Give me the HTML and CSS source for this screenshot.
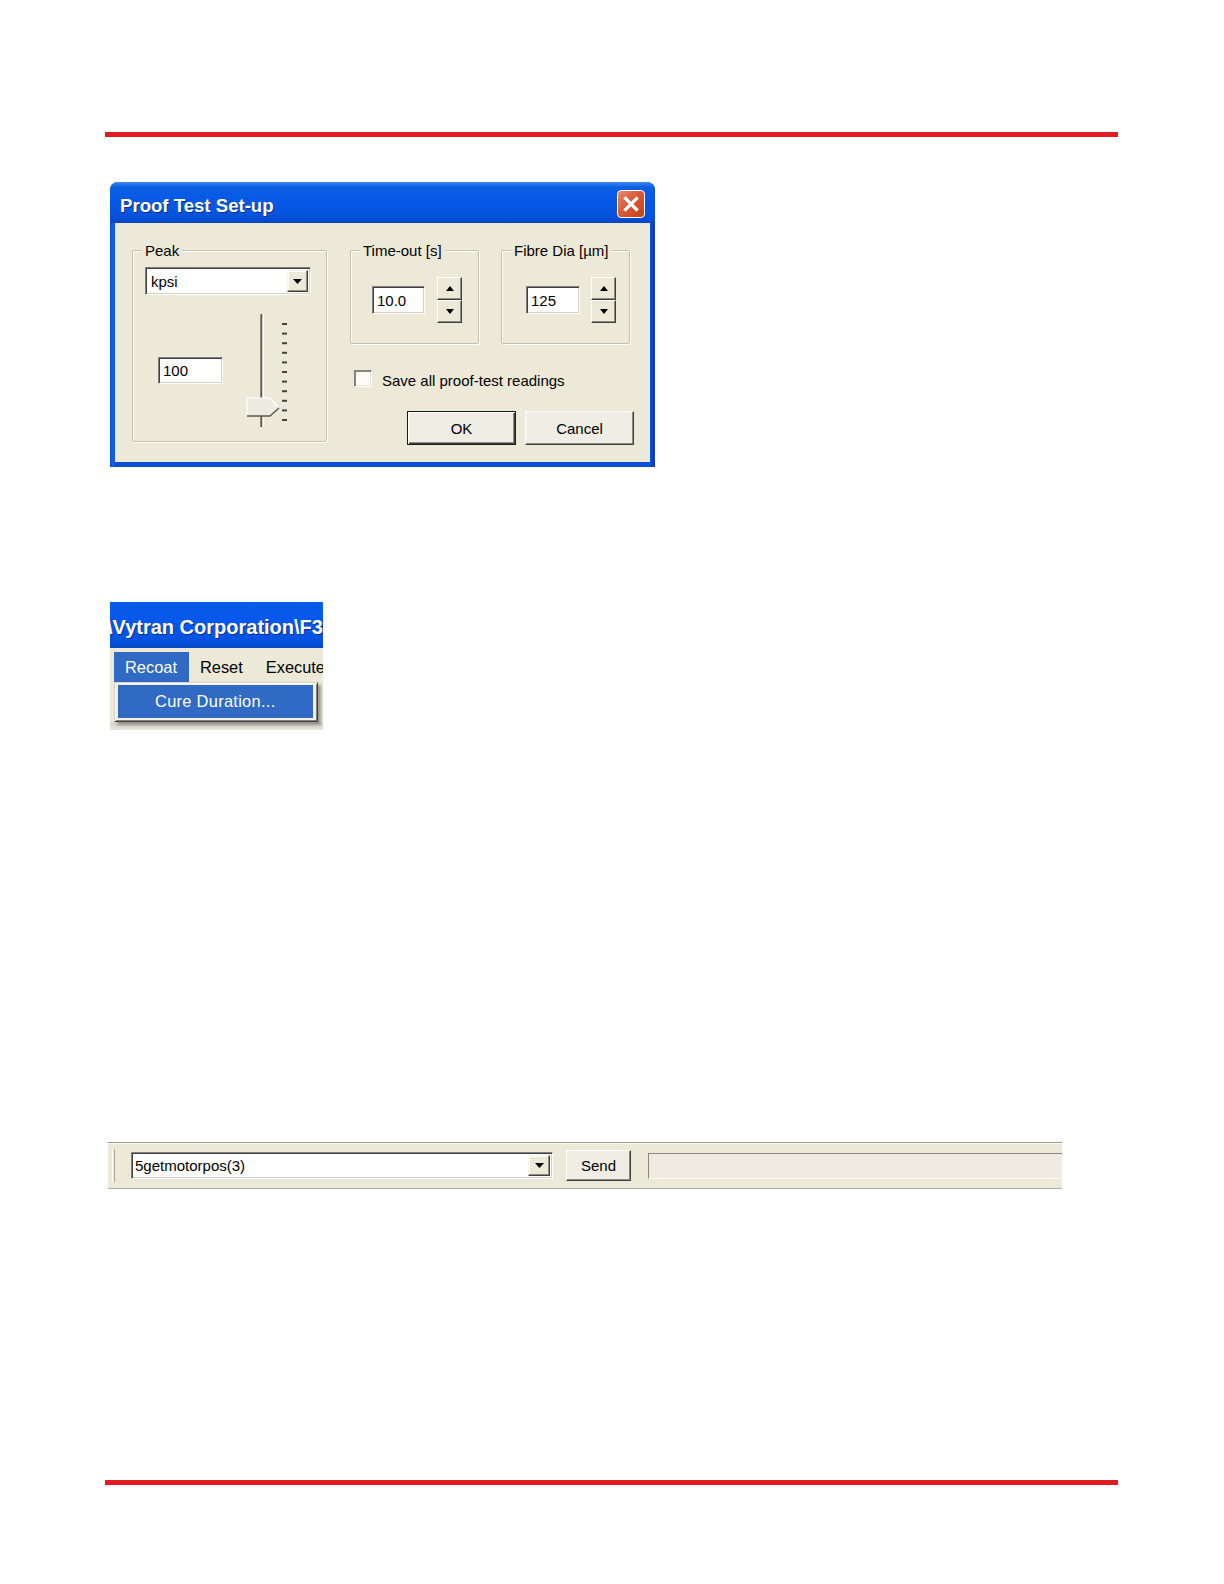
FILE: index.html
```html
<!DOCTYPE html>
<html>
<head>
<meta charset="utf-8">
<title>Proof Test Set-up</title>
<link rel="stylesheet" href="styles.css">
</head>
<body>
<div class="page">
  <div class="rule"></div>

  <div class="dialog">
    <div class="dlg-title">
      <span class="dlg-title-text">Proof Test Set-up</span>
      <span class="close-btn">
        <svg width="26" height="26" viewBox="0 0 26 26"><path d="M7.5 7.5 L18.5 18.5 M18.5 7.5 L7.5 18.5" stroke="#fff" stroke-width="3.2" stroke-linecap="square"/></svg>
      </span>
    </div>
    <div class="dlg-body">
      <div class="group group-peak">
        <span class="group-label">Peak</span>
        <div class="combo combo-kpsi">
          <span class="combo-text">kpsi</span>
          <span class="drop-btn"><svg width="9" height="5" viewBox="0 0 9 5"><polygon points="0,0 9,0 4.5,5" fill="#000"/></svg></span>
        </div>
        <div class="peak-row">
          <div class="textbox tb-peak">100</div>
          <svg class="slider" width="45" height="116" viewBox="0 0 45 116">
            <rect x="15" y="2" width="4" height="113" fill="#d8d5c8"/>
            <rect x="15" y="2" width="1" height="113" fill="#8d8b80"/>
            <rect x="16" y="2" width="1" height="113" fill="#5a584f"/>
            <rect x="18" y="2" width="1" height="113" fill="#ffffff"/>
            <polygon points="2,86 25,86 34,96 25,104 2,104" fill="#ecebe2"/>
            <polyline points="2,104 2,86 25,86 33,95" fill="none" stroke="#ffffff" stroke-width="1.2"/>
            <polyline points="34,96 25,104 2,104" fill="none" stroke="#5a584f" stroke-width="1.4"/>
            <rect x="37" y="11" width="5" height="2" fill="#444"/>
            <rect x="37" y="20.6" width="5" height="2" fill="#444"/>
            <rect x="37" y="30.2" width="5" height="2" fill="#444"/>
            <rect x="37" y="39.8" width="5" height="2" fill="#444"/>
            <rect x="37" y="49.4" width="5" height="2" fill="#444"/>
            <rect x="37" y="59" width="5" height="2" fill="#444"/>
            <rect x="37" y="68.6" width="5" height="2" fill="#444"/>
            <rect x="37" y="78.2" width="5" height="2" fill="#444"/>
            <rect x="37" y="87.8" width="5" height="2" fill="#444"/>
            <rect x="37" y="97.4" width="5" height="2" fill="#444"/>
            <rect x="37" y="107" width="5" height="2" fill="#444"/>
          </svg>
        </div>
      </div>

      <div class="right-col">
        <div class="groups-row">
          <div class="group group-small">
            <span class="group-label">Time-out [s]</span>
            <div class="spin-row spin-time">
              <div class="textbox tb-time">10.0</div>
              <div class="spinner">
                <span class="spin-btn"><svg width="8" height="5" viewBox="0 0 8 5"><polygon points="0,5 8,5 4,0" fill="#000"/></svg></span>
                <span class="spin-btn"><svg width="8" height="5" viewBox="0 0 8 5"><polygon points="0,0 8,0 4,5" fill="#000"/></svg></span>
              </div>
            </div>
          </div>
          <div class="group group-small">
            <span class="group-label">Fibre Dia [µm]</span>
            <div class="spin-row spin-fibre">
              <div class="textbox tb-fibre">125</div>
              <div class="spinner">
                <span class="spin-btn"><svg width="8" height="5" viewBox="0 0 8 5"><polygon points="0,5 8,5 4,0" fill="#000"/></svg></span>
                <span class="spin-btn"><svg width="8" height="5" viewBox="0 0 8 5"><polygon points="0,0 8,0 4,5" fill="#000"/></svg></span>
              </div>
            </div>
          </div>
        </div>
        <div class="check-row">
          <span class="checkbox"></span>
          <span class="check-label">Save all proof-test readings</span>
        </div>
        <div class="btn-row">
          <span class="btn btn-default">OK</span>
          <span class="btn">Cancel</span>
        </div>
      </div>
    </div>
  </div>

  <div class="menu-shot">
    <div class="menu-title"><span class="menu-title-text">\Vytran Corporation\F3</span></div>
    <div class="menubar">
      <span class="menu-item active">Recoat</span>
      <span class="menu-item">Reset</span>
      <span class="menu-item">Execute</span>
    </div>
    <div class="menu-area">
      <div class="dropdown">
        <div class="dropdown-item">Cure Duration...</div>
      </div>
    </div>
  </div>

  <div class="cmdbar">
    <span class="grip"></span>
    <div class="combo combo-cmd">
      <span class="combo-text">5getmotorpos(3)</span>
      <span class="drop-btn"><svg width="9" height="5" viewBox="0 0 9 5"><polygon points="0,0 9,0 4.5,5" fill="#000"/></svg></span>
    </div>
    <span class="btn btn-send">Send</span>
    <div class="status-field"></div>
  </div>

  <div class="rule rule-bottom"></div>
</div>
</body>
</html>
```

FILE: styles.css
```css
html, body {
  margin: 0;
  padding: 0;
  background: #ffffff;
}

.page {
  padding-top: 132px;
  font-family: "Liberation Sans", Arial, sans-serif;
  color: #000;
}

.rule {
  margin-left: 105px;
  width: 1013px;
  height: 5px;
  background: #e31b23;
}

.rule-bottom {
  margin-top: 291px;
}

/* ---------- Dialog ---------- */
.dialog {
  margin-top: 45px;
  margin-left: 110px;
  width: 545px;
  height: 285px;
  box-sizing: border-box;
  background: linear-gradient(to right, #0a4fd6 0, #1860e8 3px, #0a4fd6 5px, #0a4fd6 540px, #0838b8 545px);
  border-radius: 8px 8px 0 0;
  overflow: hidden;
}

.dlg-title {
  height: 41px;
  display: flex;
  justify-content: space-between;
  align-items: flex-start;
  padding: 0 10px;
  background: linear-gradient(to bottom, #3d8af7 0, #0b5fe2 5px, #0458e6 20px, #0553dc 34px, #0745c4 41px);
}

.dlg-title-text {
  padding-top: 6px;
  line-height: 35px;
  font-size: 18.6px;
  font-weight: bold;
  color: #fff;
  text-shadow: 1px 1px 0 #0b2f8a;
  white-space: nowrap;
}

.close-btn {
  margin-top: 8px;
  width: 28px;
  height: 28px;
  box-sizing: border-box;
  border: 1px solid #fff;
  border-radius: 4px;
  background: linear-gradient(135deg, #ea8b6f 0, #dc5a36 45%, #c5401b 100%);
  display: flex;
  align-items: center;
  justify-content: center;
}

.dlg-body {
  margin: 0 5px;
  height: 239px;
  background: #ece9d8;
  display: flex;
  align-items: flex-start;
  padding: 27px 0 0 17px;
  box-sizing: border-box;
  font-size: 15px;
}

.group {
  box-sizing: border-box;
  border: 1px solid #c3c0b0;
  border-radius: 2px;
  box-shadow: 1px 1px 0 #ffffff inset, 1px 1px 0 #ffffff;
  display: flex;
  flex-direction: column;
  align-items: flex-start;
}

.group-label {
  margin-top: -9px;
  margin-left: -3px;
  padding: 0 3px;
  line-height: 18px;
  height: 18px;
  background: #ece9d8;
  white-space: nowrap;
}

.group-peak {
  width: 195px;
  height: 192px;
  padding: 0 12px;
}

.combo {
  box-sizing: border-box;
  background: #fff;
  border-top: 1px solid #808080;
  border-left: 1px solid #808080;
  border-right: 1px solid #fff;
  border-bottom: 1px solid #fff;
  box-shadow: inset 1px 1px 0 #404040, inset -1px -1px 0 #d4d0c8;
  display: flex;
  align-items: center;
  justify-content: space-between;
  padding: 2px;
}

.combo-kpsi {
  margin-top: 7px;
  width: 166px;
  height: 28px;
}

.combo-text {
  padding-left: 3px;
  white-space: nowrap;
}

.drop-btn {
  box-sizing: border-box;
  width: 21px;
  height: 100%;
  background: #ece9d8;
  border-top: 1px solid #f4f3ee;
  border-left: 1px solid #f4f3ee;
  border-right: 1px solid #404040;
  border-bottom: 1px solid #404040;
  box-shadow: inset -1px -1px 0 #8e8c80, inset 1px 1px 0 #ffffff;
  display: flex;
  align-items: center;
  justify-content: center;
}

.peak-row {
  margin-top: 17px;
  height: 116px;
  display: flex;
  align-items: center;
}

.textbox {
  box-sizing: border-box;
  background: #fff;
  border-top: 1px solid #808080;
  border-left: 1px solid #808080;
  border-right: 1px solid #fff;
  border-bottom: 1px solid #fff;
  box-shadow: inset 1px 1px 0 #404040, inset -1px -1px 0 #d4d0c8;
  padding-left: 4px;
  display: flex;
  align-items: center;
  white-space: nowrap;
}

.tb-peak {
  margin-left: 13px;
  width: 65px;
  height: 27px;
}

.slider {
  display: block;
  margin-left: 22px;
}

.right-col {
  margin-left: 23px;
  width: 284px;
  display: flex;
  flex-direction: column;
}

.groups-row {
  display: flex;
  gap: 22px;
}

.group-small {
  width: 129px;
  height: 94px;
  padding-left: 12px;
}

.spin-row {
  margin-top: 17px;
  display: flex;
  align-items: center;
}

.spin-time {
  margin-left: 9px;
  gap: 12px;
}

.spin-fibre {
  margin-left: 12px;
  gap: 11px;
}

.tb-time {
  width: 53px;
  height: 28px;
}

.tb-fibre {
  width: 54px;
  height: 28px;
}

.spinner {
  width: 25px;
  height: 46px;
  display: flex;
  flex-direction: column;
}

.spin-btn {
  box-sizing: border-box;
  height: 23px;
  background: #ece9d8;
  border-top: 1px solid #fff;
  border-left: 1px solid #fff;
  border-right: 1px solid #404040;
  border-bottom: 1px solid #404040;
  box-shadow: inset -1px -1px 0 #8e8c80;
  display: flex;
  align-items: center;
  justify-content: center;
}

.check-row {
  margin-top: 26px;
  padding-left: 4px;
  display: flex;
  align-items: center;
  height: 17px;
}

.checkbox {
  box-sizing: border-box;
  width: 18px;
  height: 17px;
  background: #fbfbf8;
  border-top: 1px solid #808080;
  border-left: 1px solid #808080;
  border-right: 1px solid #fff;
  border-bottom: 1px solid #fff;
  box-shadow: inset 1px 1px 0 #8a887c, inset -1px -1px 0 #e4e2d6;
}

.check-label {
  margin-left: 10px;
  margin-top: 4px;
  white-space: nowrap;
}

.btn-row {
  margin-top: 24px;
  display: flex;
  justify-content: flex-end;
  gap: 9px;
}

.btn {
  box-sizing: border-box;
  width: 109px;
  height: 34px;
  background: #efede4;
  border-top: 1px solid #fff;
  border-left: 1px solid #fff;
  border-right: 1px solid #404040;
  border-bottom: 1px solid #404040;
  box-shadow: inset -1px -1px 0 #8e8c80;
  display: flex;
  align-items: center;
  justify-content: center;
  white-space: nowrap;
}

.btn-default {
  border: 1px solid #1a1a1a;
  box-shadow: inset 1px 1px 0 #fff, inset -1px -1px 0 #404040, inset -2px -2px 0 #8e8c80;
}

/* ---------- Menu screenshot ---------- */
.menu-shot {
  margin-top: 135px;
  margin-left: 110px;
  width: 213px;
  height: 128px;
  overflow: hidden;
  background: #ece9d8;
}

.menu-title {
  height: 46px;
  box-sizing: border-box;
  padding-top: 4px;
  background: linear-gradient(to bottom, #0a5ce8 0, #0458ec 40%, #0552e0 85%, #0747c6 100%);
  overflow: hidden;
}

.menu-title-text {
  display: block;
  margin-left: -3px;
  line-height: 42px;
  font-size: 20px;
  font-weight: bold;
  color: #fff;
  white-space: nowrap;
  text-shadow: 1px 1px 0 #0b2f8a;
}

.menubar {
  height: 34px;
  box-sizing: border-box;
  padding: 4px 0 0 4px;
  display: flex;
  font-size: 16.4px;
}

.menu-item {
  height: 30px;
  line-height: 30px;
  padding: 0 12px 0 11px;
  white-space: nowrap;
}

.menu-item.active {
  background: #316ac5;
  color: #fff;
}

.menu-area {
  height: 48px;
  padding-left: 4px;
  background: linear-gradient(to bottom, #ece9d8 0, #ece9d8 40px, #d9d7cc 41px, #e6e4dc 48px);
}

.dropdown {
  width: 204px;
  height: 40px;
  box-sizing: border-box;
  padding: 2px 4px 3px 3px;
  background: #f1efe6;
  border-top: 1px solid #d4d0c8;
  border-left: 1px solid #d4d0c8;
  border-right: 1px solid #404040;
  border-bottom: 1px solid #404040;
  box-shadow: inset 1px 1px 0 #fff, inset -1px -1px 0 #808080, 3px 3px 3px rgba(0, 0, 0, 0.35);
}

.dropdown-item {
  height: 33px;
  line-height: 33px;
  padding-left: 37px;
  background: #316ac5;
  color: #fff;
  font-size: 16.4px;
  letter-spacing: 0.3px;
  white-space: nowrap;
}

/* ---------- Command bar ---------- */
.cmdbar {
  margin-top: 412px;
  margin-left: 108px;
  width: 954px;
  height: 47px;
  box-sizing: border-box;
  border-top: 1px solid #9d9a8c;
  border-bottom: 1px solid #b4b1a3;
  box-shadow: inset 0 1px 0 #faf9f4;
  background: #ece9d8;
  display: flex;
  align-items: center;
  padding-left: 4px;
  overflow: hidden;
  font-size: 15px;
}

.grip {
  width: 1px;
  height: 33px;
  border-left: 1px solid #fff;
  border-right: 1px solid #aca899;
}

.combo-cmd {
  margin-left: 16px;
  width: 422px;
  height: 27px;
}

.combo-cmd .combo-text {
  padding-left: 1px;
}

.combo-cmd .drop-btn {
  width: 22px;
}

.btn-send {
  margin-left: 13px;
  width: 65px;
  height: 31px;
}

.status-field {
  margin-left: 17px;
  flex: 1 0 auto;
  margin-right: -20px;
  height: 26px;
  box-sizing: border-box;
  background: #efebe2;
  border-top: 1px solid #8a887e;
  border-left: 1px solid #8a887e;
  border-bottom: 1px solid #fff;
}
```
